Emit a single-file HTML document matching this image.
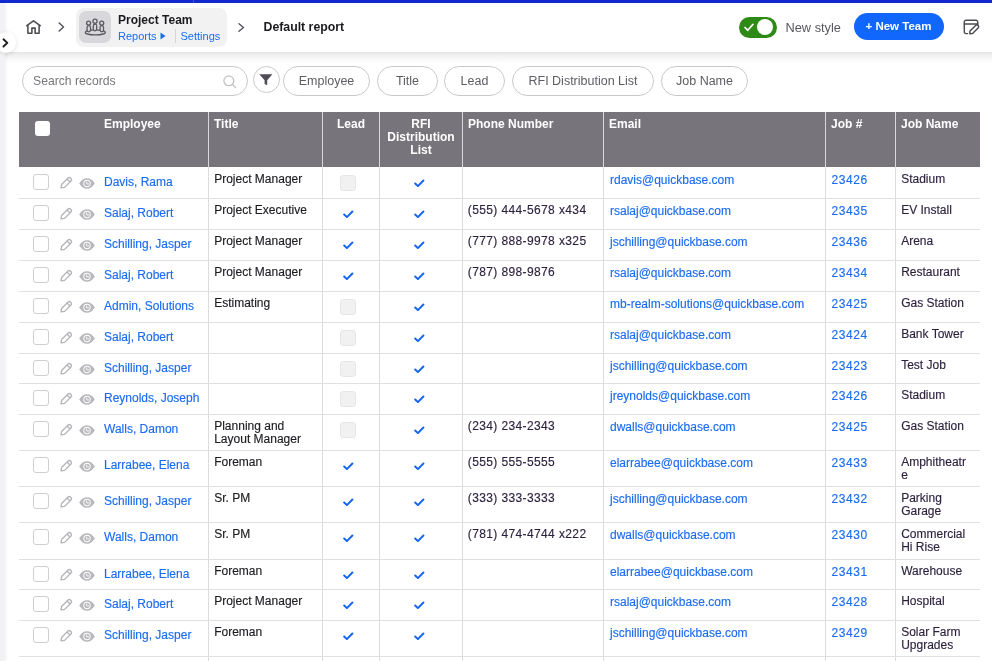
<!DOCTYPE html>
<html><head><meta charset="utf-8">
<style>
*{margin:0;padding:0;box-sizing:border-box} svg{display:block}
html,body{width:992px;height:661px;overflow:hidden;background:#fff;font-family:"Liberation Sans",sans-serif;position:relative}
.topbar{position:absolute;left:0;top:0;width:992px;height:3px;background:#1229d0}
.leftstrip{position:absolute;left:0;top:3px;width:5px;height:658px;background:#f2f2f4;box-shadow:1px 0 3px rgba(0,0,0,0.06)}
.header{position:absolute;left:5px;top:3px;width:987px;height:49px;background:#fff}
.hshadow{position:absolute;left:0;top:52px;width:992px;height:12px;background:linear-gradient(#e3e3e4,#ececed 17%,#f4f4f5 40%,#f9f9f9 62%,#fdfdfd 85%,#fff)}
.expbtn{position:absolute;left:-4.5px;top:32.3px;width:20.5px;height:20.5px;border-radius:50%;background:#fff;box-shadow:0 1px 4px rgba(0,0,0,0.12)}
.crumb{position:absolute;left:76px;top:8px;width:151px;height:39px;background:#f2f2f3;border-radius:8px}
.appicon{position:absolute;left:79px;top:11px;width:32px;height:32px;background:#d8d7db;border-radius:7px}
.pt{position:absolute;left:118px;top:12.8px;font-size:12px;font-weight:bold;color:#1b1a1f;white-space:nowrap}
.rep{position:absolute;left:118px;top:29.5px;font-size:11px;color:#1b6cf2;white-space:nowrap}
.dr{position:absolute;left:263.5px;top:20px;font-size:12.3px;font-weight:bold;color:#1b1a1f;white-space:nowrap}
.toggle{position:absolute;left:739px;top:17px;width:38px;height:21px;border-radius:11px;background:#2d8a17}
.knob{position:absolute;left:17.9px;top:2.1px;width:16px;height:16px;border-radius:50%;background:#fff}
.ns{position:absolute;left:785.5px;top:19.5px;font-size:12.8px;color:#58575c;white-space:nowrap}
.btn{position:absolute;left:854px;top:13px;width:90px;height:27px;border-radius:14px;background:#1166fb;color:#fff;font-size:11.5px;font-weight:bold;white-space:nowrap}
.btn span{position:absolute;left:11.5px;top:6.5px}
.search{position:absolute;left:22px;top:66px;width:226px;height:30px;border:1px solid #c9c8cc;border-radius:15px}
.search span{position:absolute;left:10px;top:7px;font-size:12.2px;color:#77767b}
.filt{position:absolute;left:253px;top:66px;width:27px;height:27px;border:1px solid #c9c8cc;border-radius:50%}
.pill{position:absolute;top:66px;height:30px;border:1px solid #c9c8cc;border-radius:15px;font-size:12.5px;color:#5d5c62;white-space:nowrap;text-align:center;line-height:28px}
.table{position:absolute;left:19px;top:0;width:961px;height:661px}
.thead{position:absolute;left:19px;top:112px;width:961px;height:55px;background:#78747b}
.hvl{position:absolute;top:0;width:1px;height:55px;background:#d8d7da}
.th{position:absolute;top:6px;font-size:12px;font-weight:bold;color:#fff;line-height:13.2px;white-space:nowrap}
.vl{position:absolute;top:167px;width:1px;height:494px;background:#dcdcdc}
.row{position:absolute;left:19px;width:961px}
.hl{position:absolute;left:19px;width:961px;height:1px;background:#e0e0e3}
.cb{position:absolute;width:16px;height:16px;border:1.3px solid #cfcfd2;border-radius:3px;background:#fff}
.dcb{position:absolute;width:16px;height:16px;border:1px solid #e6e6e8;border-radius:3px;background:#f1f1f2}
.emp{position:absolute;top:8px;font-size:12px;color:#1b6cf2;white-space:nowrap}
.c{position:absolute;top:6px;padding-left:5.2px;font-size:12px;line-height:12.6px;color:#1d1b21;white-space:nowrap}
.lk{color:#1b6cf2;top:6.6px;padding-left:6px}
.c,.emp{-webkit-text-stroke:0.15px currentColor}
.lk.job{padding-left:5.5px;letter-spacing:0.6px}
.ph{padding-left:4.8px;letter-spacing:0.38px;color:#2a1f3c}
.jn{color:#2a1f3c}
</style></head><body><div id="wrap" style="position:absolute;left:0;top:0;width:992px;height:661px;will-change:transform">
<div class="topbar"></div><div style="position:absolute;left:193px;top:0;width:1px;height:3px;background:#3f52d8"></div>
<div class="header"></div><div class="hshadow"></div>
<div class="leftstrip"></div>
<div class="expbtn"></div>
<svg style="position:absolute;left:2px;top:37.5px" width="8" height="10" viewBox="0 0 8 10"><path d="M1.5 1.3 L5.3 4.9 L1.5 8.5" fill="none" stroke="#1b1a1f" stroke-width="1.9" stroke-linecap="round" stroke-linejoin="round"/></svg>
<svg style="position:absolute;left:23px;top:17px" width="21" height="21" viewBox="0 0 21 21"><path d="M3.8 8.7 L10.5 3.9 L17.2 8.7 M4.9 8 V16.2 H8.9 V11.1 H12.1 V16.2 H16.1 V8" fill="none" stroke="#4d4b52" stroke-width="1.55" stroke-linejoin="round" stroke-linecap="round"/></svg>
<svg style="position:absolute;left:58px;top:22px" width="7" height="10" viewBox="0 0 7 10"><path d="M1.2 1 L5.5 5 L1.2 9" fill="none" stroke="#55535a" stroke-width="1.5" stroke-linecap="round" stroke-linejoin="round"/></svg>
<div class="crumb"></div>
<div class="appicon"></div>
<svg style="position:absolute;left:80px;top:12px" width="31" height="30" viewBox="0 0 31 30"><g stroke="#5a5860" stroke-width="1.3" fill="#d8d7db"><ellipse cx="15.3" cy="20.4" rx="10" ry="2.5"/><rect x="7.1" y="13.6" width="3.4" height="6.2" rx="1.7"/><rect x="20.1" y="13.6" width="3.4" height="6.2" rx="1.7"/><rect x="13.3" y="12.2" width="3.4" height="6.6" rx="1.7"/><circle cx="8.6" cy="11.1" r="2"/><circle cx="21.7" cy="11.1" r="2"/><circle cx="15" cy="9.2" r="2.1"/></g></svg>
<div class="pt">Project Team</div>
<div class="rep">Reports</div>
<svg style="position:absolute;left:160px;top:32px" width="6" height="8" viewBox="0 0 6 8"><path d="M0.5 0.5 L5.5 4 L0.5 7.5 Z" fill="#1b6cf2"/></svg>
<div style="position:absolute;left:175px;top:29px;width:1px;height:14px;background:#d6d5d9"></div>
<div class="rep" style="left:180.5px">Settings</div>
<svg style="position:absolute;left:238px;top:23px" width="7" height="9" viewBox="0 0 7 9"><path d="M1 0.8 L5.5 4.5 L1 8.2" fill="none" stroke="#55535a" stroke-width="1.4" stroke-linecap="round" stroke-linejoin="round"/></svg>
<div class="dr">Default report</div>
<div class="toggle"><div class="knob"></div>
<svg style="position:absolute;left:5px;top:6px" width="10" height="9" viewBox="0 0 10 9"><path d="M1 4.5 L3.8 7.3 L9 1.3" fill="none" stroke="#fff" stroke-width="1.7" stroke-linecap="round" stroke-linejoin="round"/></svg>
</div>
<div class="ns">New style</div>
<div class="btn"><span>+ New Team</span></div>
<svg style="position:absolute;left:958px;top:14px" width="26" height="26" viewBox="0 0 26 26"><g fill="none" stroke="#4d4b52" stroke-width="1.45" stroke-linejoin="round" stroke-linecap="round"><path d="M9.6 19.6 H8 a1.7 1.7 0 0 1 -1.7 -1.7 V8 a1.7 1.7 0 0 1 1.7 -1.7 H18 a1.7 1.7 0 0 1 1.7 1.7 V10.6"/><path d="M6.3 9.9 H19.7"/><g transform="translate(15.6,16) rotate(45)"><path d="M-1.8 -4.6 V3.3 L0 5.4 L1.8 3.3 V-4.6 A1.8 1.8 0 0 0 -1.8 -4.6 Z"/></g></g></svg>

<div class="search"><span>Search records</span>
<svg style="position:absolute;left:200px;top:8px" width="14" height="14" viewBox="0 0 14 14"><g fill="none" stroke="#c2c1c6" stroke-width="1.3" stroke-linecap="round"><circle cx="5.8" cy="5.8" r="4.9"/><path d="M9.5 9.5 L12.6 12.6"/></g></svg>
</div>
<div class="filt"><svg style="position:absolute;left:5px;top:7px" width="14" height="12" viewBox="0 0 14 12"><path d="M0.3 0.3 H13.4 L8.2 6.2 V11.3 L5.6 10 V6.2 Z" fill="#4f4c55"/></svg></div>
<div class="pill" style="left:283px;width:87px">Employee</div>
<div class="pill" style="left:377px;width:61px">Title</div>
<div class="pill" style="left:444px;width:61px">Lead</div>
<div class="pill" style="left:512px;width:142px">RFI Distribution List</div>
<div class="pill" style="left:661px;width:87px">Job Name</div>

<div class="thead">
<div class="hvl" style="left:189px"></div><div class="hvl" style="left:303px"></div><div class="hvl" style="left:360px"></div><div class="hvl" style="left:443px"></div><div class="hvl" style="left:584px"></div><div class="hvl" style="left:806px"></div><div class="hvl" style="left:876px"></div>
<span class="cb" style="left:16px;top:9px;border:none;background:#fff;width:15px;height:15px;border-radius:3px"></span>
<div class="th" style="left:85px">Employee</div>
<div class="th" style="left:195px">Title</div>
<div class="th" style="left:304px;width:56px;text-align:center">Lead</div>
<div class="th" style="left:361px;width:82px;text-align:center">RFI<br>Distribution<br>List</div>
<div class="th" style="left:449px">Phone Number</div>
<div class="th" style="left:590px">Email</div>
<div class="th" style="left:812px">Job #</div>
<div class="th" style="left:882px">Job Name</div>
</div>
<div class="vl" style="left:208px"></div><div class="vl" style="left:322px"></div><div class="vl" style="left:379px"></div><div class="vl" style="left:462px"></div><div class="vl" style="left:603px"></div><div class="vl" style="left:825px"></div><div class="vl" style="left:895px"></div>
<div class="hl" style="top:198px"></div><div class="row" style="top:167px;height:31px"><span class="cb" style="left:14px;top:7px"></span><span style="position:absolute;left:40px;top:9px"><svg class="pen" width="14" height="14" viewBox="0 0 14 14"><g transform="translate(7,7) rotate(45)" fill="none" stroke="#b5b4b9" stroke-width="1.35" stroke-linejoin="round"><path d="M-2.1 -4.6 V4.1 L0 7 L2.1 4.1 V-4.6 A2.1 2.1 0 0 0 -2.1 -4.6 Z"/><path d="M-2.1 -3.6 H2.1"/></g></svg></span><span style="position:absolute;left:59.5px;top:10.5px"><svg class="eye" width="16" height="11" viewBox="0 0 16 11"><path d="M0.2 5.5 C2.4 1.9 5 0.3 8 0.3 C11 0.3 13.6 1.9 15.8 5.5 C13.6 9.1 11 10.7 8 10.7 C5 10.7 2.4 9.1 0.2 5.5 Z" fill="#b8b7bc"/><circle cx="8" cy="5.5" r="3.7" fill="#fff"/><circle cx="8" cy="5.5" r="2.7" fill="#b8b7bc"/><path d="M7.6 3.5 V5.9 H10" fill="none" stroke="#fff" stroke-width="0.9"/></svg></span><a class="emp" style="left:85px">Davis, Rama</a><div class="c" style="left:190px">Project Manager</div><span class="dcb" style="left:321px;top:8px"></span><span style="position:absolute;left:395px;top:12px"><svg class="chk" width="11" height="8" viewBox="0 0 11 8"><path d="M1.2 4.5 L3.9 7.1 L9.4 1.5" fill="none" stroke="#1466f0" stroke-width="2" stroke-linecap="round" stroke-linejoin="round"/></svg></span><a class="c lk" style="left:585px">rdavis@quickbase.com</a><a class="c lk job" style="left:807px">23426</a><div class="c jn" style="left:877px">Stadium</div></div><div class="hl" style="top:229px"></div><div class="row" style="top:198px;height:31px"><span class="cb" style="left:14px;top:7px"></span><span style="position:absolute;left:40px;top:9px"><svg class="pen" width="14" height="14" viewBox="0 0 14 14"><g transform="translate(7,7) rotate(45)" fill="none" stroke="#b5b4b9" stroke-width="1.35" stroke-linejoin="round"><path d="M-2.1 -4.6 V4.1 L0 7 L2.1 4.1 V-4.6 A2.1 2.1 0 0 0 -2.1 -4.6 Z"/><path d="M-2.1 -3.6 H2.1"/></g></svg></span><span style="position:absolute;left:59.5px;top:10.5px"><svg class="eye" width="16" height="11" viewBox="0 0 16 11"><path d="M0.2 5.5 C2.4 1.9 5 0.3 8 0.3 C11 0.3 13.6 1.9 15.8 5.5 C13.6 9.1 11 10.7 8 10.7 C5 10.7 2.4 9.1 0.2 5.5 Z" fill="#b8b7bc"/><circle cx="8" cy="5.5" r="3.7" fill="#fff"/><circle cx="8" cy="5.5" r="2.7" fill="#b8b7bc"/><path d="M7.6 3.5 V5.9 H10" fill="none" stroke="#fff" stroke-width="0.9"/></svg></span><a class="emp" style="left:85px">Salaj, Robert</a><div class="c" style="left:190px">Project Executive</div><span style="position:absolute;left:324px;top:12px"><svg class="chk" width="11" height="8" viewBox="0 0 11 8"><path d="M1.2 4.5 L3.9 7.1 L9.4 1.5" fill="none" stroke="#1466f0" stroke-width="2" stroke-linecap="round" stroke-linejoin="round"/></svg></span><span style="position:absolute;left:395px;top:12px"><svg class="chk" width="11" height="8" viewBox="0 0 11 8"><path d="M1.2 4.5 L3.9 7.1 L9.4 1.5" fill="none" stroke="#1466f0" stroke-width="2" stroke-linecap="round" stroke-linejoin="round"/></svg></span><div class="c ph" style="left:444px">(555) 444-5678 x434</div><a class="c lk" style="left:585px">rsalaj@quickbase.com</a><a class="c lk job" style="left:807px">23435</a><div class="c jn" style="left:877px">EV Install</div></div><div class="hl" style="top:260px"></div><div class="row" style="top:229px;height:31px"><span class="cb" style="left:14px;top:7px"></span><span style="position:absolute;left:40px;top:9px"><svg class="pen" width="14" height="14" viewBox="0 0 14 14"><g transform="translate(7,7) rotate(45)" fill="none" stroke="#b5b4b9" stroke-width="1.35" stroke-linejoin="round"><path d="M-2.1 -4.6 V4.1 L0 7 L2.1 4.1 V-4.6 A2.1 2.1 0 0 0 -2.1 -4.6 Z"/><path d="M-2.1 -3.6 H2.1"/></g></svg></span><span style="position:absolute;left:59.5px;top:10.5px"><svg class="eye" width="16" height="11" viewBox="0 0 16 11"><path d="M0.2 5.5 C2.4 1.9 5 0.3 8 0.3 C11 0.3 13.6 1.9 15.8 5.5 C13.6 9.1 11 10.7 8 10.7 C5 10.7 2.4 9.1 0.2 5.5 Z" fill="#b8b7bc"/><circle cx="8" cy="5.5" r="3.7" fill="#fff"/><circle cx="8" cy="5.5" r="2.7" fill="#b8b7bc"/><path d="M7.6 3.5 V5.9 H10" fill="none" stroke="#fff" stroke-width="0.9"/></svg></span><a class="emp" style="left:85px">Schilling, Jasper</a><div class="c" style="left:190px">Project Manager</div><span style="position:absolute;left:324px;top:12px"><svg class="chk" width="11" height="8" viewBox="0 0 11 8"><path d="M1.2 4.5 L3.9 7.1 L9.4 1.5" fill="none" stroke="#1466f0" stroke-width="2" stroke-linecap="round" stroke-linejoin="round"/></svg></span><span style="position:absolute;left:395px;top:12px"><svg class="chk" width="11" height="8" viewBox="0 0 11 8"><path d="M1.2 4.5 L3.9 7.1 L9.4 1.5" fill="none" stroke="#1466f0" stroke-width="2" stroke-linecap="round" stroke-linejoin="round"/></svg></span><div class="c ph" style="left:444px">(777) 888-9978 x325</div><a class="c lk" style="left:585px">jschilling@quickbase.com</a><a class="c lk job" style="left:807px">23436</a><div class="c jn" style="left:877px">Arena</div></div><div class="hl" style="top:291px"></div><div class="row" style="top:260px;height:31px"><span class="cb" style="left:14px;top:7px"></span><span style="position:absolute;left:40px;top:9px"><svg class="pen" width="14" height="14" viewBox="0 0 14 14"><g transform="translate(7,7) rotate(45)" fill="none" stroke="#b5b4b9" stroke-width="1.35" stroke-linejoin="round"><path d="M-2.1 -4.6 V4.1 L0 7 L2.1 4.1 V-4.6 A2.1 2.1 0 0 0 -2.1 -4.6 Z"/><path d="M-2.1 -3.6 H2.1"/></g></svg></span><span style="position:absolute;left:59.5px;top:10.5px"><svg class="eye" width="16" height="11" viewBox="0 0 16 11"><path d="M0.2 5.5 C2.4 1.9 5 0.3 8 0.3 C11 0.3 13.6 1.9 15.8 5.5 C13.6 9.1 11 10.7 8 10.7 C5 10.7 2.4 9.1 0.2 5.5 Z" fill="#b8b7bc"/><circle cx="8" cy="5.5" r="3.7" fill="#fff"/><circle cx="8" cy="5.5" r="2.7" fill="#b8b7bc"/><path d="M7.6 3.5 V5.9 H10" fill="none" stroke="#fff" stroke-width="0.9"/></svg></span><a class="emp" style="left:85px">Salaj, Robert</a><div class="c" style="left:190px">Project Manager</div><span style="position:absolute;left:324px;top:12px"><svg class="chk" width="11" height="8" viewBox="0 0 11 8"><path d="M1.2 4.5 L3.9 7.1 L9.4 1.5" fill="none" stroke="#1466f0" stroke-width="2" stroke-linecap="round" stroke-linejoin="round"/></svg></span><span style="position:absolute;left:395px;top:12px"><svg class="chk" width="11" height="8" viewBox="0 0 11 8"><path d="M1.2 4.5 L3.9 7.1 L9.4 1.5" fill="none" stroke="#1466f0" stroke-width="2" stroke-linecap="round" stroke-linejoin="round"/></svg></span><div class="c ph" style="left:444px">(787) 898-9876</div><a class="c lk" style="left:585px">rsalaj@quickbase.com</a><a class="c lk job" style="left:807px">23434</a><div class="c jn" style="left:877px">Restaurant</div></div><div class="hl" style="top:322px"></div><div class="row" style="top:291px;height:31px"><span class="cb" style="left:14px;top:7px"></span><span style="position:absolute;left:40px;top:9px"><svg class="pen" width="14" height="14" viewBox="0 0 14 14"><g transform="translate(7,7) rotate(45)" fill="none" stroke="#b5b4b9" stroke-width="1.35" stroke-linejoin="round"><path d="M-2.1 -4.6 V4.1 L0 7 L2.1 4.1 V-4.6 A2.1 2.1 0 0 0 -2.1 -4.6 Z"/><path d="M-2.1 -3.6 H2.1"/></g></svg></span><span style="position:absolute;left:59.5px;top:10.5px"><svg class="eye" width="16" height="11" viewBox="0 0 16 11"><path d="M0.2 5.5 C2.4 1.9 5 0.3 8 0.3 C11 0.3 13.6 1.9 15.8 5.5 C13.6 9.1 11 10.7 8 10.7 C5 10.7 2.4 9.1 0.2 5.5 Z" fill="#b8b7bc"/><circle cx="8" cy="5.5" r="3.7" fill="#fff"/><circle cx="8" cy="5.5" r="2.7" fill="#b8b7bc"/><path d="M7.6 3.5 V5.9 H10" fill="none" stroke="#fff" stroke-width="0.9"/></svg></span><a class="emp" style="left:85px">Admin, Solutions</a><div class="c" style="left:190px">Estimating</div><span class="dcb" style="left:321px;top:8px"></span><span style="position:absolute;left:395px;top:12px"><svg class="chk" width="11" height="8" viewBox="0 0 11 8"><path d="M1.2 4.5 L3.9 7.1 L9.4 1.5" fill="none" stroke="#1466f0" stroke-width="2" stroke-linecap="round" stroke-linejoin="round"/></svg></span><a class="c lk" style="left:585px">mb-realm-solutions@quickbase.com</a><a class="c lk job" style="left:807px">23425</a><div class="c jn" style="left:877px">Gas Station</div></div><div class="hl" style="top:353px"></div><div class="row" style="top:322px;height:31px"><span class="cb" style="left:14px;top:7px"></span><span style="position:absolute;left:40px;top:9px"><svg class="pen" width="14" height="14" viewBox="0 0 14 14"><g transform="translate(7,7) rotate(45)" fill="none" stroke="#b5b4b9" stroke-width="1.35" stroke-linejoin="round"><path d="M-2.1 -4.6 V4.1 L0 7 L2.1 4.1 V-4.6 A2.1 2.1 0 0 0 -2.1 -4.6 Z"/><path d="M-2.1 -3.6 H2.1"/></g></svg></span><span style="position:absolute;left:59.5px;top:10.5px"><svg class="eye" width="16" height="11" viewBox="0 0 16 11"><path d="M0.2 5.5 C2.4 1.9 5 0.3 8 0.3 C11 0.3 13.6 1.9 15.8 5.5 C13.6 9.1 11 10.7 8 10.7 C5 10.7 2.4 9.1 0.2 5.5 Z" fill="#b8b7bc"/><circle cx="8" cy="5.5" r="3.7" fill="#fff"/><circle cx="8" cy="5.5" r="2.7" fill="#b8b7bc"/><path d="M7.6 3.5 V5.9 H10" fill="none" stroke="#fff" stroke-width="0.9"/></svg></span><a class="emp" style="left:85px">Salaj, Robert</a><div class="c" style="left:190px"></div><span class="dcb" style="left:321px;top:8px"></span><span style="position:absolute;left:395px;top:12px"><svg class="chk" width="11" height="8" viewBox="0 0 11 8"><path d="M1.2 4.5 L3.9 7.1 L9.4 1.5" fill="none" stroke="#1466f0" stroke-width="2" stroke-linecap="round" stroke-linejoin="round"/></svg></span><a class="c lk" style="left:585px">rsalaj@quickbase.com</a><a class="c lk job" style="left:807px">23424</a><div class="c jn" style="left:877px">Bank Tower</div></div><div class="hl" style="top:383px"></div><div class="row" style="top:353px;height:30px"><span class="cb" style="left:14px;top:7px"></span><span style="position:absolute;left:40px;top:9px"><svg class="pen" width="14" height="14" viewBox="0 0 14 14"><g transform="translate(7,7) rotate(45)" fill="none" stroke="#b5b4b9" stroke-width="1.35" stroke-linejoin="round"><path d="M-2.1 -4.6 V4.1 L0 7 L2.1 4.1 V-4.6 A2.1 2.1 0 0 0 -2.1 -4.6 Z"/><path d="M-2.1 -3.6 H2.1"/></g></svg></span><span style="position:absolute;left:59.5px;top:10.5px"><svg class="eye" width="16" height="11" viewBox="0 0 16 11"><path d="M0.2 5.5 C2.4 1.9 5 0.3 8 0.3 C11 0.3 13.6 1.9 15.8 5.5 C13.6 9.1 11 10.7 8 10.7 C5 10.7 2.4 9.1 0.2 5.5 Z" fill="#b8b7bc"/><circle cx="8" cy="5.5" r="3.7" fill="#fff"/><circle cx="8" cy="5.5" r="2.7" fill="#b8b7bc"/><path d="M7.6 3.5 V5.9 H10" fill="none" stroke="#fff" stroke-width="0.9"/></svg></span><a class="emp" style="left:85px">Schilling, Jasper</a><div class="c" style="left:190px"></div><span class="dcb" style="left:321px;top:8px"></span><span style="position:absolute;left:395px;top:12px"><svg class="chk" width="11" height="8" viewBox="0 0 11 8"><path d="M1.2 4.5 L3.9 7.1 L9.4 1.5" fill="none" stroke="#1466f0" stroke-width="2" stroke-linecap="round" stroke-linejoin="round"/></svg></span><a class="c lk" style="left:585px">jschilling@quickbase.com</a><a class="c lk job" style="left:807px">23423</a><div class="c jn" style="left:877px">Test Job</div></div><div class="hl" style="top:414px"></div><div class="row" style="top:383px;height:31px"><span class="cb" style="left:14px;top:7px"></span><span style="position:absolute;left:40px;top:9px"><svg class="pen" width="14" height="14" viewBox="0 0 14 14"><g transform="translate(7,7) rotate(45)" fill="none" stroke="#b5b4b9" stroke-width="1.35" stroke-linejoin="round"><path d="M-2.1 -4.6 V4.1 L0 7 L2.1 4.1 V-4.6 A2.1 2.1 0 0 0 -2.1 -4.6 Z"/><path d="M-2.1 -3.6 H2.1"/></g></svg></span><span style="position:absolute;left:59.5px;top:10.5px"><svg class="eye" width="16" height="11" viewBox="0 0 16 11"><path d="M0.2 5.5 C2.4 1.9 5 0.3 8 0.3 C11 0.3 13.6 1.9 15.8 5.5 C13.6 9.1 11 10.7 8 10.7 C5 10.7 2.4 9.1 0.2 5.5 Z" fill="#b8b7bc"/><circle cx="8" cy="5.5" r="3.7" fill="#fff"/><circle cx="8" cy="5.5" r="2.7" fill="#b8b7bc"/><path d="M7.6 3.5 V5.9 H10" fill="none" stroke="#fff" stroke-width="0.9"/></svg></span><a class="emp" style="left:85px">Reynolds, Joseph</a><div class="c" style="left:190px"></div><span class="dcb" style="left:321px;top:8px"></span><span style="position:absolute;left:395px;top:12px"><svg class="chk" width="11" height="8" viewBox="0 0 11 8"><path d="M1.2 4.5 L3.9 7.1 L9.4 1.5" fill="none" stroke="#1466f0" stroke-width="2" stroke-linecap="round" stroke-linejoin="round"/></svg></span><a class="c lk" style="left:585px">jreynolds@quickbase.com</a><a class="c lk job" style="left:807px">23426</a><div class="c jn" style="left:877px">Stadium</div></div><div class="hl" style="top:450px"></div><div class="row" style="top:414px;height:36px"><span class="cb" style="left:14px;top:7px"></span><span style="position:absolute;left:40px;top:9px"><svg class="pen" width="14" height="14" viewBox="0 0 14 14"><g transform="translate(7,7) rotate(45)" fill="none" stroke="#b5b4b9" stroke-width="1.35" stroke-linejoin="round"><path d="M-2.1 -4.6 V4.1 L0 7 L2.1 4.1 V-4.6 A2.1 2.1 0 0 0 -2.1 -4.6 Z"/><path d="M-2.1 -3.6 H2.1"/></g></svg></span><span style="position:absolute;left:59.5px;top:10.5px"><svg class="eye" width="16" height="11" viewBox="0 0 16 11"><path d="M0.2 5.5 C2.4 1.9 5 0.3 8 0.3 C11 0.3 13.6 1.9 15.8 5.5 C13.6 9.1 11 10.7 8 10.7 C5 10.7 2.4 9.1 0.2 5.5 Z" fill="#b8b7bc"/><circle cx="8" cy="5.5" r="3.7" fill="#fff"/><circle cx="8" cy="5.5" r="2.7" fill="#b8b7bc"/><path d="M7.6 3.5 V5.9 H10" fill="none" stroke="#fff" stroke-width="0.9"/></svg></span><a class="emp" style="left:85px">Walls, Damon</a><div class="c" style="left:190px">Planning and<br>Layout Manager</div><span class="dcb" style="left:321px;top:8px"></span><span style="position:absolute;left:395px;top:12px"><svg class="chk" width="11" height="8" viewBox="0 0 11 8"><path d="M1.2 4.5 L3.9 7.1 L9.4 1.5" fill="none" stroke="#1466f0" stroke-width="2" stroke-linecap="round" stroke-linejoin="round"/></svg></span><div class="c ph" style="left:444px">(234) 234-2343</div><a class="c lk" style="left:585px">dwalls@quickbase.com</a><a class="c lk job" style="left:807px">23425</a><div class="c jn" style="left:877px">Gas Station</div></div><div class="hl" style="top:486px"></div><div class="row" style="top:450px;height:36px"><span class="cb" style="left:14px;top:7px"></span><span style="position:absolute;left:40px;top:9px"><svg class="pen" width="14" height="14" viewBox="0 0 14 14"><g transform="translate(7,7) rotate(45)" fill="none" stroke="#b5b4b9" stroke-width="1.35" stroke-linejoin="round"><path d="M-2.1 -4.6 V4.1 L0 7 L2.1 4.1 V-4.6 A2.1 2.1 0 0 0 -2.1 -4.6 Z"/><path d="M-2.1 -3.6 H2.1"/></g></svg></span><span style="position:absolute;left:59.5px;top:10.5px"><svg class="eye" width="16" height="11" viewBox="0 0 16 11"><path d="M0.2 5.5 C2.4 1.9 5 0.3 8 0.3 C11 0.3 13.6 1.9 15.8 5.5 C13.6 9.1 11 10.7 8 10.7 C5 10.7 2.4 9.1 0.2 5.5 Z" fill="#b8b7bc"/><circle cx="8" cy="5.5" r="3.7" fill="#fff"/><circle cx="8" cy="5.5" r="2.7" fill="#b8b7bc"/><path d="M7.6 3.5 V5.9 H10" fill="none" stroke="#fff" stroke-width="0.9"/></svg></span><a class="emp" style="left:85px">Larrabee, Elena</a><div class="c" style="left:190px">Foreman</div><span style="position:absolute;left:324px;top:12px"><svg class="chk" width="11" height="8" viewBox="0 0 11 8"><path d="M1.2 4.5 L3.9 7.1 L9.4 1.5" fill="none" stroke="#1466f0" stroke-width="2" stroke-linecap="round" stroke-linejoin="round"/></svg></span><span style="position:absolute;left:395px;top:12px"><svg class="chk" width="11" height="8" viewBox="0 0 11 8"><path d="M1.2 4.5 L3.9 7.1 L9.4 1.5" fill="none" stroke="#1466f0" stroke-width="2" stroke-linecap="round" stroke-linejoin="round"/></svg></span><div class="c ph" style="left:444px">(555) 555-5555</div><a class="c lk" style="left:585px">elarrabee@quickbase.com</a><a class="c lk job" style="left:807px">23433</a><div class="c jn" style="left:877px">Amphitheatr<br>e</div></div><div class="hl" style="top:522px"></div><div class="row" style="top:486px;height:36px"><span class="cb" style="left:14px;top:7px"></span><span style="position:absolute;left:40px;top:9px"><svg class="pen" width="14" height="14" viewBox="0 0 14 14"><g transform="translate(7,7) rotate(45)" fill="none" stroke="#b5b4b9" stroke-width="1.35" stroke-linejoin="round"><path d="M-2.1 -4.6 V4.1 L0 7 L2.1 4.1 V-4.6 A2.1 2.1 0 0 0 -2.1 -4.6 Z"/><path d="M-2.1 -3.6 H2.1"/></g></svg></span><span style="position:absolute;left:59.5px;top:10.5px"><svg class="eye" width="16" height="11" viewBox="0 0 16 11"><path d="M0.2 5.5 C2.4 1.9 5 0.3 8 0.3 C11 0.3 13.6 1.9 15.8 5.5 C13.6 9.1 11 10.7 8 10.7 C5 10.7 2.4 9.1 0.2 5.5 Z" fill="#b8b7bc"/><circle cx="8" cy="5.5" r="3.7" fill="#fff"/><circle cx="8" cy="5.5" r="2.7" fill="#b8b7bc"/><path d="M7.6 3.5 V5.9 H10" fill="none" stroke="#fff" stroke-width="0.9"/></svg></span><a class="emp" style="left:85px">Schilling, Jasper</a><div class="c" style="left:190px">Sr. PM</div><span style="position:absolute;left:324px;top:12px"><svg class="chk" width="11" height="8" viewBox="0 0 11 8"><path d="M1.2 4.5 L3.9 7.1 L9.4 1.5" fill="none" stroke="#1466f0" stroke-width="2" stroke-linecap="round" stroke-linejoin="round"/></svg></span><span style="position:absolute;left:395px;top:12px"><svg class="chk" width="11" height="8" viewBox="0 0 11 8"><path d="M1.2 4.5 L3.9 7.1 L9.4 1.5" fill="none" stroke="#1466f0" stroke-width="2" stroke-linecap="round" stroke-linejoin="round"/></svg></span><div class="c ph" style="left:444px">(333) 333-3333</div><a class="c lk" style="left:585px">jschilling@quickbase.com</a><a class="c lk job" style="left:807px">23432</a><div class="c jn" style="left:877px">Parking<br>Garage</div></div><div class="hl" style="top:559px"></div><div class="row" style="top:522px;height:37px"><span class="cb" style="left:14px;top:7px"></span><span style="position:absolute;left:40px;top:9px"><svg class="pen" width="14" height="14" viewBox="0 0 14 14"><g transform="translate(7,7) rotate(45)" fill="none" stroke="#b5b4b9" stroke-width="1.35" stroke-linejoin="round"><path d="M-2.1 -4.6 V4.1 L0 7 L2.1 4.1 V-4.6 A2.1 2.1 0 0 0 -2.1 -4.6 Z"/><path d="M-2.1 -3.6 H2.1"/></g></svg></span><span style="position:absolute;left:59.5px;top:10.5px"><svg class="eye" width="16" height="11" viewBox="0 0 16 11"><path d="M0.2 5.5 C2.4 1.9 5 0.3 8 0.3 C11 0.3 13.6 1.9 15.8 5.5 C13.6 9.1 11 10.7 8 10.7 C5 10.7 2.4 9.1 0.2 5.5 Z" fill="#b8b7bc"/><circle cx="8" cy="5.5" r="3.7" fill="#fff"/><circle cx="8" cy="5.5" r="2.7" fill="#b8b7bc"/><path d="M7.6 3.5 V5.9 H10" fill="none" stroke="#fff" stroke-width="0.9"/></svg></span><a class="emp" style="left:85px">Walls, Damon</a><div class="c" style="left:190px">Sr. PM</div><span style="position:absolute;left:324px;top:12px"><svg class="chk" width="11" height="8" viewBox="0 0 11 8"><path d="M1.2 4.5 L3.9 7.1 L9.4 1.5" fill="none" stroke="#1466f0" stroke-width="2" stroke-linecap="round" stroke-linejoin="round"/></svg></span><span style="position:absolute;left:395px;top:12px"><svg class="chk" width="11" height="8" viewBox="0 0 11 8"><path d="M1.2 4.5 L3.9 7.1 L9.4 1.5" fill="none" stroke="#1466f0" stroke-width="2" stroke-linecap="round" stroke-linejoin="round"/></svg></span><div class="c ph" style="left:444px">(781) 474-4744 x222</div><a class="c lk" style="left:585px">dwalls@quickbase.com</a><a class="c lk job" style="left:807px">23430</a><div class="c jn" style="left:877px">Commercial<br>Hi Rise</div></div><div class="hl" style="top:589px"></div><div class="row" style="top:559px;height:30px"><span class="cb" style="left:14px;top:7px"></span><span style="position:absolute;left:40px;top:9px"><svg class="pen" width="14" height="14" viewBox="0 0 14 14"><g transform="translate(7,7) rotate(45)" fill="none" stroke="#b5b4b9" stroke-width="1.35" stroke-linejoin="round"><path d="M-2.1 -4.6 V4.1 L0 7 L2.1 4.1 V-4.6 A2.1 2.1 0 0 0 -2.1 -4.6 Z"/><path d="M-2.1 -3.6 H2.1"/></g></svg></span><span style="position:absolute;left:59.5px;top:10.5px"><svg class="eye" width="16" height="11" viewBox="0 0 16 11"><path d="M0.2 5.5 C2.4 1.9 5 0.3 8 0.3 C11 0.3 13.6 1.9 15.8 5.5 C13.6 9.1 11 10.7 8 10.7 C5 10.7 2.4 9.1 0.2 5.5 Z" fill="#b8b7bc"/><circle cx="8" cy="5.5" r="3.7" fill="#fff"/><circle cx="8" cy="5.5" r="2.7" fill="#b8b7bc"/><path d="M7.6 3.5 V5.9 H10" fill="none" stroke="#fff" stroke-width="0.9"/></svg></span><a class="emp" style="left:85px">Larrabee, Elena</a><div class="c" style="left:190px">Foreman</div><span style="position:absolute;left:324px;top:12px"><svg class="chk" width="11" height="8" viewBox="0 0 11 8"><path d="M1.2 4.5 L3.9 7.1 L9.4 1.5" fill="none" stroke="#1466f0" stroke-width="2" stroke-linecap="round" stroke-linejoin="round"/></svg></span><span style="position:absolute;left:395px;top:12px"><svg class="chk" width="11" height="8" viewBox="0 0 11 8"><path d="M1.2 4.5 L3.9 7.1 L9.4 1.5" fill="none" stroke="#1466f0" stroke-width="2" stroke-linecap="round" stroke-linejoin="round"/></svg></span><a class="c lk" style="left:585px">elarrabee@quickbase.com</a><a class="c lk job" style="left:807px">23431</a><div class="c jn" style="left:877px">Warehouse</div></div><div class="hl" style="top:620px"></div><div class="row" style="top:589px;height:31px"><span class="cb" style="left:14px;top:7px"></span><span style="position:absolute;left:40px;top:9px"><svg class="pen" width="14" height="14" viewBox="0 0 14 14"><g transform="translate(7,7) rotate(45)" fill="none" stroke="#b5b4b9" stroke-width="1.35" stroke-linejoin="round"><path d="M-2.1 -4.6 V4.1 L0 7 L2.1 4.1 V-4.6 A2.1 2.1 0 0 0 -2.1 -4.6 Z"/><path d="M-2.1 -3.6 H2.1"/></g></svg></span><span style="position:absolute;left:59.5px;top:10.5px"><svg class="eye" width="16" height="11" viewBox="0 0 16 11"><path d="M0.2 5.5 C2.4 1.9 5 0.3 8 0.3 C11 0.3 13.6 1.9 15.8 5.5 C13.6 9.1 11 10.7 8 10.7 C5 10.7 2.4 9.1 0.2 5.5 Z" fill="#b8b7bc"/><circle cx="8" cy="5.5" r="3.7" fill="#fff"/><circle cx="8" cy="5.5" r="2.7" fill="#b8b7bc"/><path d="M7.6 3.5 V5.9 H10" fill="none" stroke="#fff" stroke-width="0.9"/></svg></span><a class="emp" style="left:85px">Salaj, Robert</a><div class="c" style="left:190px">Project Manager</div><span style="position:absolute;left:324px;top:12px"><svg class="chk" width="11" height="8" viewBox="0 0 11 8"><path d="M1.2 4.5 L3.9 7.1 L9.4 1.5" fill="none" stroke="#1466f0" stroke-width="2" stroke-linecap="round" stroke-linejoin="round"/></svg></span><span style="position:absolute;left:395px;top:12px"><svg class="chk" width="11" height="8" viewBox="0 0 11 8"><path d="M1.2 4.5 L3.9 7.1 L9.4 1.5" fill="none" stroke="#1466f0" stroke-width="2" stroke-linecap="round" stroke-linejoin="round"/></svg></span><a class="c lk" style="left:585px">rsalaj@quickbase.com</a><a class="c lk job" style="left:807px">23428</a><div class="c jn" style="left:877px">Hospital</div></div><div class="hl" style="top:656px"></div><div class="row" style="top:620px;height:36px"><span class="cb" style="left:14px;top:7px"></span><span style="position:absolute;left:40px;top:9px"><svg class="pen" width="14" height="14" viewBox="0 0 14 14"><g transform="translate(7,7) rotate(45)" fill="none" stroke="#b5b4b9" stroke-width="1.35" stroke-linejoin="round"><path d="M-2.1 -4.6 V4.1 L0 7 L2.1 4.1 V-4.6 A2.1 2.1 0 0 0 -2.1 -4.6 Z"/><path d="M-2.1 -3.6 H2.1"/></g></svg></span><span style="position:absolute;left:59.5px;top:10.5px"><svg class="eye" width="16" height="11" viewBox="0 0 16 11"><path d="M0.2 5.5 C2.4 1.9 5 0.3 8 0.3 C11 0.3 13.6 1.9 15.8 5.5 C13.6 9.1 11 10.7 8 10.7 C5 10.7 2.4 9.1 0.2 5.5 Z" fill="#b8b7bc"/><circle cx="8" cy="5.5" r="3.7" fill="#fff"/><circle cx="8" cy="5.5" r="2.7" fill="#b8b7bc"/><path d="M7.6 3.5 V5.9 H10" fill="none" stroke="#fff" stroke-width="0.9"/></svg></span><a class="emp" style="left:85px">Schilling, Jasper</a><div class="c" style="left:190px">Foreman</div><span style="position:absolute;left:324px;top:12px"><svg class="chk" width="11" height="8" viewBox="0 0 11 8"><path d="M1.2 4.5 L3.9 7.1 L9.4 1.5" fill="none" stroke="#1466f0" stroke-width="2" stroke-linecap="round" stroke-linejoin="round"/></svg></span><span style="position:absolute;left:395px;top:12px"><svg class="chk" width="11" height="8" viewBox="0 0 11 8"><path d="M1.2 4.5 L3.9 7.1 L9.4 1.5" fill="none" stroke="#1466f0" stroke-width="2" stroke-linecap="round" stroke-linejoin="round"/></svg></span><a class="c lk" style="left:585px">jschilling@quickbase.com</a><a class="c lk job" style="left:807px">23429</a><div class="c jn" style="left:877px">Solar Farm<br>Upgrades</div></div>
</div></body></html>
